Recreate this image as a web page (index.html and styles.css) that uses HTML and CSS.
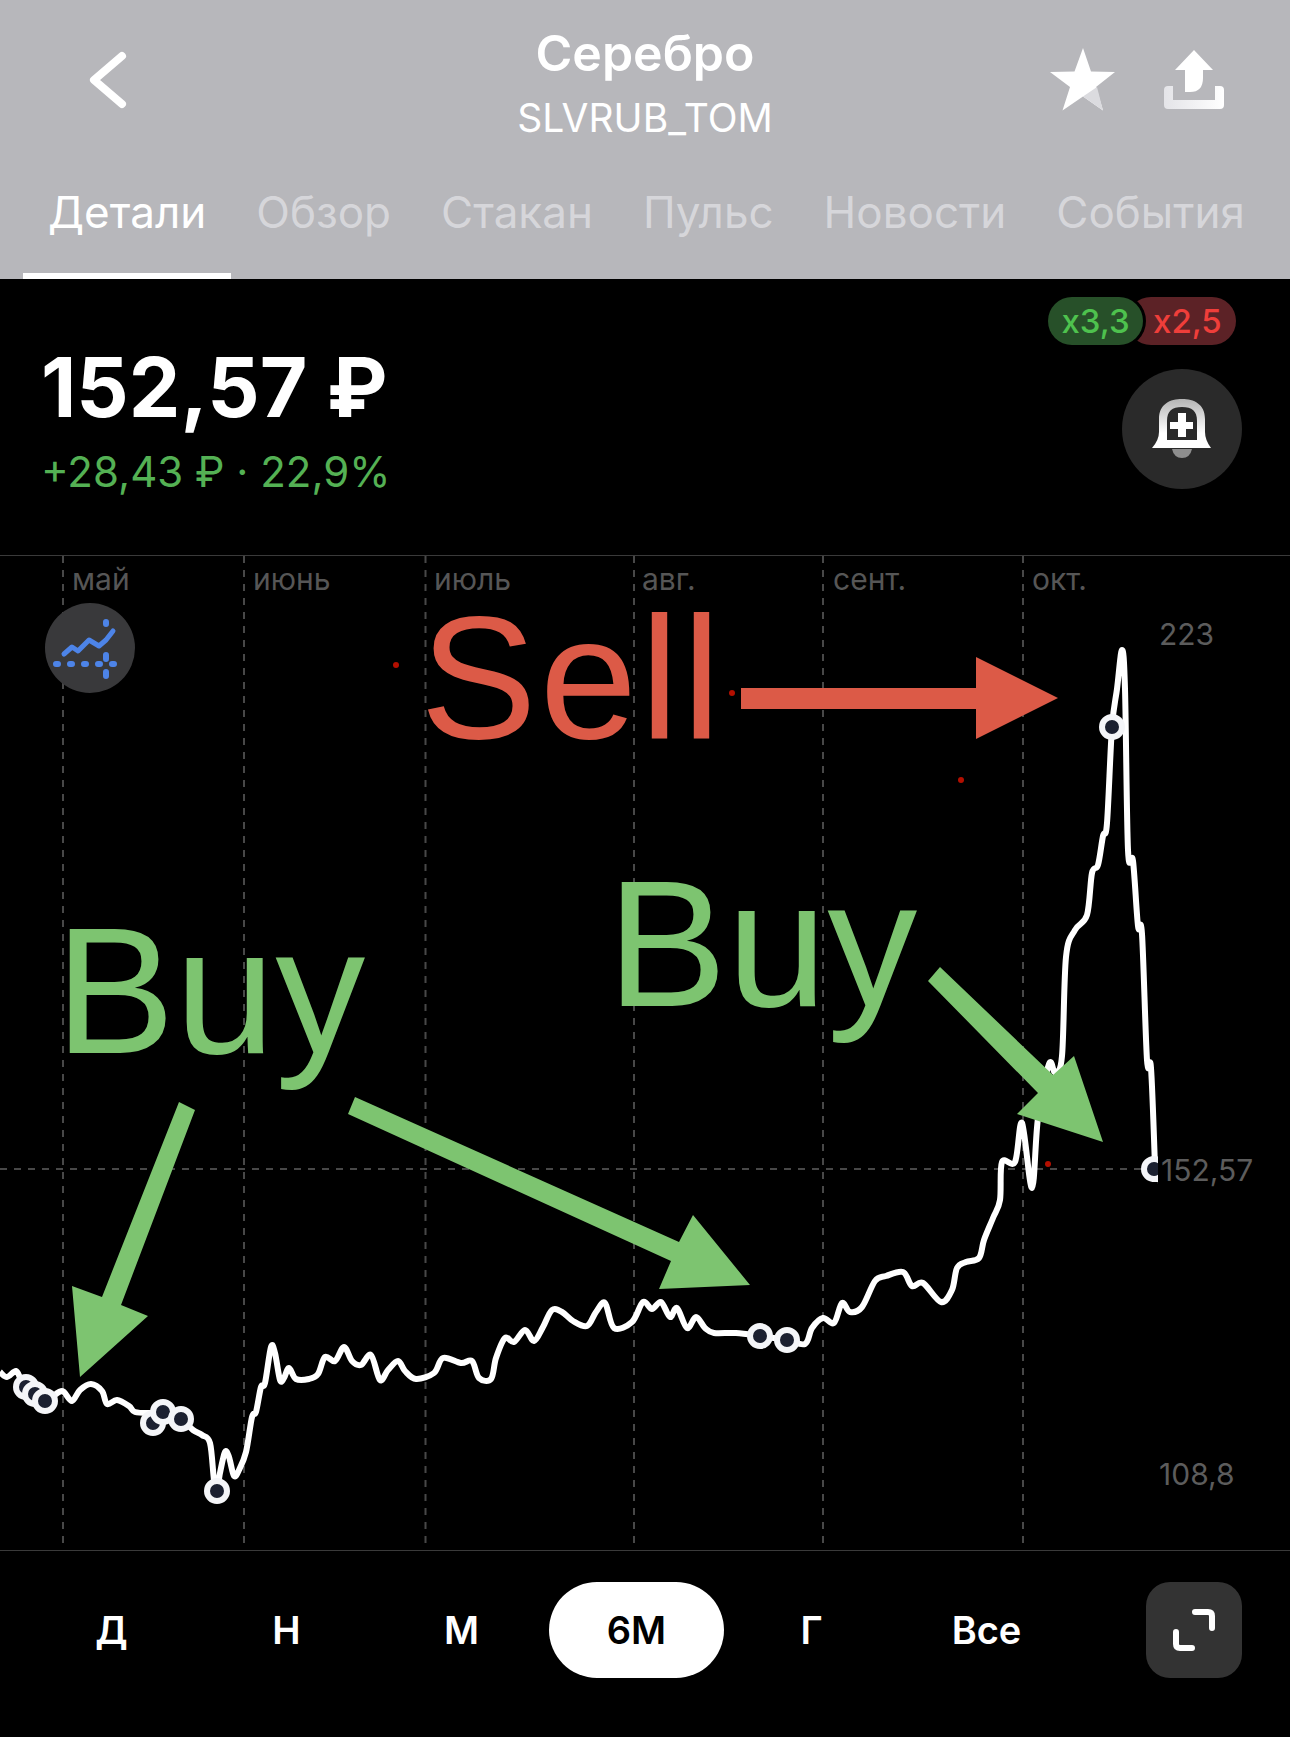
FILE: index.html
```html
<!DOCTYPE html>
<html lang="ru">
<head>
    <meta charset="UTF-8">
    <meta name="viewport" content="width=device-width, initial-scale=1.0">
    <title>Серебро</title>
    <link rel="stylesheet" href="styles.css">
</head>
<body>

    <header class="header">
        <div class="topbar">
            <button class="back" aria-label="Назад">
                <svg width="42" height="66" viewBox="0 0 42 66"><path class="back-path" d="M35 8 L7 32 L35 56"/></svg>
            </button>
            <div class="title-box">
                <h1 class="title">Серебро</h1>
                <div class="ticker">SLVRUB_TOM</div>
            </div>
            <div class="actions">
                <svg width="66" height="63" viewBox="0 0 66 63">
                    <path fill="#fff" d="M33 0 L41 23.5 L65 24 L46 39 L53 62.5 L33 48.5 L12.5 62.5 L20 39 L0 24 L24.5 23.5 Z"/>
                    <path fill="#dbdbdf" d="M33 48.5 L47 39 L53 62.5 Z"/>
                </svg>
                <svg width="60" height="60" viewBox="0 0 60 60">
                    <defs>
                        <linearGradient id="tray" x1="0" y1="0" x2="1" y2="0">
                            <stop offset="0" stop-color="#e4e4e8"/>
                            <stop offset="1" stop-color="#fff"/>
                        </linearGradient>
                    </defs>
                    <path fill="#fff" d="M30 0 L49 20 L39 20 L39 28 Q39 42 26 42 L21 42 L21 20 L11 20 Z"/>
                    <path fill="url(#tray)" d="M4 36 L9 36 L9 50 L51 50 L51 36 L56 36 Q60 36 60 40 L60 55 Q60 59 56 59 L4 59 Q0 59 0 55 L0 40 Q0 36 4 36 Z"/>
                </svg>
            </div>
        </div>
        <nav class="tabs">
            <a class="tab tab-active">Детали</a>
            <a class="tab">Обзор</a>
            <a class="tab">Стакан</a>
            <a class="tab">Пульс</a>
            <a class="tab">Новости</a>
            <a class="tab">События</a>
        </nav>
    </header>

    <section class="quote">
        <div class="quote-info">
            <div class="price">152,57 ₽</div>
            <div class="change">+28,43 ₽ · 22,9%</div>
        </div>
        <div class="quote-side">
            <div class="badges">
                <span class="badge badge-buy">x3,3</span>
                <span class="badge badge-sell">x2,5</span>
            </div>
            <button class="bell" aria-label="Уведомление">
                <svg width="60" height="60" viewBox="0 0 60 60">
                    <defs>
                        <linearGradient id="bellfill" x1="0" y1="0" x2="0" y2="1">
                            <stop offset="0" stop-color="#b4b4b4"/>
                            <stop offset="0.7" stop-color="#fff"/>
                        </linearGradient>
                    </defs>
                    <path fill="#8e8e8e" d="M20 50 L40 50 Q38 59 30 59 Q22 59 20 50 Z"/>
                    <path fill="url(#bellfill)" fill-rule="evenodd" d="M30 0 C42 0 53 5 53 20 L53 33 Q53 41 59 49 L0 49 Q7 41 7 33 L7 20 C7 5 18 0 30 0 Z M30 8 C20 8 15 12 15 22 L15 41 L45 41 L45 22 C45 12 40 8 30 8 Z"/>
                    <path fill="#fff" d="M26 14 L34 14 L34 23 L41 23 L41 30 L34 30 L34 38 L26 38 L26 30 L18 30 L18 23 L26 23 Z"/>
                </svg>
            </button>
        </div>
    </section>

    <div class="chart">
        <svg class="chart-svg" width="1290" height="994" viewBox="0 556 1290 994">
            <defs>
                <clipPath id="lineclip"><rect x="0" y="556" width="1158" height="994"/></clipPath>
            </defs>

            <!-- grid -->
            <path class="grid" d="M63 556V1545 M244 556V1545 M425.500 556V1545 M634 556V1545 M823 556V1545 M1023 556V1545 M0 1169H1150"/>

            <text class="month" x="72" y="590">май</text>
            <text class="month" x="253" y="590">июнь</text>
            <text class="month" x="434" y="590">июль</text>
            <text class="month" x="642" y="590">авг.</text>
            <text class="month" x="833" y="590">сент.</text>
            <text class="month" x="1032" y="590">окт.</text>

            <text class="axis" x="1159" y="645">223</text>
            <text class="axis" x="1161" y="1181">152,57</text>
            <text class="axis" x="1159" y="1485">108,8</text>

            <!-- indicator button -->
            <circle class="ind-bg" cx="90" cy="648" r="45"/>
            <polyline class="ind-line" points="64,654 72,647 78,651 89,640 99,646 106,640 113,631"/>
            <path class="ind-dots" d="M56 664h2 M70 664h2 M84 664h2 M98 664h2 M112 664h2 M106 622v2 M106 655v4 M106 672v4"/>

            <!-- price line, smoothed in chart.js -->
            <g clip-path="url(#lineclip)">
                <path id="priceLine" class="line" data-points="0,1372 7,1377 16,1371 21,1380 26,1387 35,1394 45,1401 59,1392 64,1392 72,1401 80,1390 91,1384 102,1391 107,1404 117,1400 129,1406 135,1412 150,1413 163,1412 181,1419 193,1430 202,1435 210,1443 214,1480 217,1491 220,1473 225,1452 229,1457 234,1476 239,1470 246,1452 252,1417 256,1412 261,1387 265,1383 271,1347 275,1353 280,1380 284,1378 289,1368 296,1379 309,1379 318,1374 325,1357 335,1361 344,1347 352,1361 361,1365 371,1355 380,1380 388,1370 398,1361 405,1371 416,1379 434,1373 443,1358 461,1363 472,1361 479,1378 491,1379 496,1358 505,1338 514,1342 525,1330 534,1341 543,1327 552,1310 562,1312 573,1321 587,1326 596,1312 605,1303 614,1328 632,1322 643,1302 652,1309 661,1302 670,1317 677,1308 687,1328 696,1317 705,1328 714,1333 736,1333 760,1336 787,1340 805,1344 812,1328 823,1318 834,1323 842,1303 850,1312 862,1307 875,1281 886,1276 903,1272 912,1286 923,1283 941,1302 952,1290 957,1268 966,1262 979,1258 984,1240 993,1218 1000,1200 1002,1162 1015,1162 1022,1123 1032,1188 1038,1118 1049,1064 1055,1072 1062,1056 1066,957 1075,930 1087,915 1092,873 1098,865 1103,836 1107,823 1112,727 1117,689 1122,650 1125,689 1128,850 1133,861 1138,926 1142,934 1147,1060 1151,1068 1155,1167 1155,1182"/>
                <circle class="dot" cx="26" cy="1387" r="10"/>
                <circle class="dot" cx="35" cy="1394" r="10"/>
                <circle class="dot" cx="45" cy="1401" r="10"/>
                <circle class="dot" cx="153" cy="1423" r="10"/>
                <circle class="dot" cx="163" cy="1412" r="10"/>
                <circle class="dot" cx="181" cy="1419" r="10"/>
                <circle class="dot" cx="217" cy="1491" r="10"/>
                <circle class="dot" cx="760" cy="1336" r="10"/>
                <circle class="dot" cx="787" cy="1340" r="10"/>
                <circle class="dot" cx="1112" cy="727" r="10"/>
                <circle class="dot" cx="1154" cy="1169" r="10"/>
            </g>

            <!-- small red specks -->
            <circle class="speck" cx="396" cy="665" r="3"/>
            <circle class="speck" cx="732" cy="693" r="3"/>
            <circle class="speck" cx="961" cy="780" r="3"/>
            <circle class="speck" cx="1048" cy="1164" r="3"/>

            <!-- annotations -->
            <text class="note note-sell" x="420" y="738">Sell</text>
            <polygon class="arrow-sell" points="741,688 976,688 976,657 1058,698 976,739 976,709 741,709"/>

            <text class="note note-buy" x="55" y="1053">Buy</text>
            <text class="note note-buy" x="607" y="1006">Buy</text>
            <polygon class="arrow-buy" points="179,1102 195,1110 121,1305 148,1316 80,1377 72,1286 102,1297"/>
            <polygon class="arrow-buy" points="355,1097 679,1242 693,1215 750,1285 659,1289 671,1261 348,1114"/>
            <polygon class="arrow-buy" points="940,967 1053,1075 1074,1056 1103,1142 1017,1114 1038,1093 928,981"/>
        </svg>
    </div>

    <footer class="ranges">
        <a class="range">Д</a>
        <a class="range">Н</a>
        <a class="range">М</a>
        <a class="range range-active">6М</a>
        <a class="range">Г</a>
        <a class="range">Все</a>
        <button class="expand" aria-label="Развернуть">
            <svg width="42" height="42" viewBox="0 0 42 42"><path class="expand-path" d="M22 3 H35 Q39 3 39 7 V19 M3 23 V35 Q3 39 7 39 H19"/></svg>
        </button>
    </footer>

    <script src="chart.js"></script>
</body>
</html>
```

FILE: styles.css
```css
* {
    box-sizing: border-box;
}
body {
    margin: 0;
    background-color: #000;
    color: #fff;
    font-family: Inter, "Noto Sans", sans-serif;
}
button {
    border: none;
    padding: 0;
    background: none;
}

/* header */
.header {
    height: 279px;
    background-color: #b7b7bb;
    display: flex;
    flex-direction: column;
    justify-content: space-between;
}
.topbar {
    display: grid;
    grid-template-columns: 1fr auto 1fr;
    align-items: start;
    padding: 27px 66px 0;
}
.back {
    justify-self: start;
    margin-top: 21px;
    margin-left: 21px;
}
.back-path {
    fill: none;
    stroke: #fff;
    stroke-width: 8;
    stroke-linecap: round;
    stroke-linejoin: round;
}
.title-box {
    text-align: center;
}
.title {
    margin: 0;
    font-size: 50px;
    line-height: 52px;
    font-weight: 600;
}
.ticker {
    margin-top: 18px;
    font-size: 39px;
    line-height: 42px;
}
.actions {
    justify-self: end;
    display: flex;
    align-items: center;
    gap: 48px;
    margin-top: 21px;
}
.tabs {
    display: flex;
    padding-left: 23px;
}
.tab {
    padding: 0 25px 36px;
    font-size: 44px;
    line-height: 50px;
    color: #d6d6da;
    border-bottom: 6px solid transparent;
}
.tab-active {
    color: #fff;
    border-bottom-color: #fff;
}

/* price block */
.quote {
    height: 276px;
    display: flex;
    justify-content: space-between;
    padding: 18px 48px 0 41px;
}
.quote-info {
    padding-top: 46px;
}
.price {
    font-size: 82px;
    line-height: 90px;
    font-weight: 700;
}
.change {
    margin-top: 15px;
    font-size: 42px;
    line-height: 48px;
    color: #54b154;
}
.quote-side {
    display: flex;
    flex-direction: column;
    align-items: flex-end;
    gap: 24px;
}
.badges {
    display: flex;
    margin-right: 6px;
}
.badge {
    height: 48px;
    line-height: 48px;
    border-radius: 24px;
    font-size: 33px;
    font-weight: 500;
}
.badge-buy {
    position: relative;
    z-index: 1;
    width: 95px;
    text-align: center;
    background-color: #275029;
    color: #4ec24e;
    box-shadow: 0 0 0 3px #000;
}
.badge-sell {
    width: 109px;
    margin-left: -16px;
    padding-left: 26px;
    background-color: #5c2226;
    color: #ef3e3a;
}
.bell {
    width: 120px;
    height: 120px;
    border-radius: 50%;
    background-color: #2a2a2a;
    display: flex;
    align-items: center;
    justify-content: center;
}

/* chart */
.chart {
    height: 995px;
    border-top: 1px solid #3a3a3a;
}
.chart-svg {
    display: block;
}
.grid {
    fill: none;
    stroke: #484848;
    stroke-width: 2;
    stroke-dasharray: 7 7;
}
.month {
    font-size: 30px;
    fill: #565656;
}
.axis {
    font-size: 30px;
    fill: #5c5c5c;
}
.ind-bg {
    fill: #39393b;
}
.ind-line {
    fill: none;
    stroke: #4d84e8;
    stroke-width: 5;
    stroke-linecap: round;
    stroke-linejoin: round;
}
.ind-dots {
    fill: none;
    stroke: #4d84e8;
    stroke-width: 6;
    stroke-linecap: round;
}
.line {
    fill: none;
    stroke: #fff;
    stroke-width: 6;
    stroke-linejoin: round;
}
.dot {
    fill: #1b2030;
    stroke: #f4f5f8;
    stroke-width: 6;
}
.speck {
    fill: #b30f00;
}
.note {
    font-family: "Liberation Sans", Arial, sans-serif;
    font-size: 180px;
}
.note-sell {
    font-size: 175px;
    letter-spacing: 3px;
    fill: #dc5a47;
}
.note-buy {
    fill: #7dc470;
}
.arrow-sell {
    fill: #dc5a47;
}
.arrow-buy {
    fill: #7dc470;
}

/* bottom range bar */
.ranges {
    height: 187px;
    display: flex;
    align-items: flex-start;
    padding: 31px 48px 0 24px;
    border-top: 1px solid #3a3a3a;
}
.range {
    width: 175px;
    height: 96px;
    line-height: 96px;
    border-radius: 48px;
    text-align: center;
    font-size: 38px;
    font-weight: 600;
}
.range-active {
    background-color: #fff;
    color: #000;
}
.expand {
    width: 96px;
    height: 96px;
    margin-left: auto;
    border-radius: 24px;
    background-color: #333;
    display: flex;
    align-items: center;
    justify-content: center;
}
.expand-path {
    fill: none;
    stroke: #fff;
    stroke-width: 6;
    stroke-linecap: round;
}
```

FILE: chart.js
```js
// Turn the list of price points into a smooth curve
const priceLine = document.getElementById('priceLine');
const pts = priceLine.dataset.points.split(' ').map(p => p.split(',').map(Number));

let d = `M${pts[0][0]} ${pts[0][1]}`;
for (let i = 0; i < pts.length - 1; i++) {
    const p0 = pts[i - 1] || pts[i];
    const p1 = pts[i];
    const p2 = pts[i + 1];
    const p3 = pts[i + 2] || p2;
    const c1x = p1[0] + (p2[0] - p0[0]) / 6;
    const c1y = p1[1] + (p2[1] - p0[1]) / 6;
    const c2x = p2[0] - (p3[0] - p1[0]) / 6;
    const c2y = p2[1] - (p3[1] - p1[1]) / 6;
    d += ` C${c1x} ${c1y} ${c2x} ${c2y} ${p2[0]} ${p2[1]}`;
}
priceLine.setAttribute('d', d);
```
